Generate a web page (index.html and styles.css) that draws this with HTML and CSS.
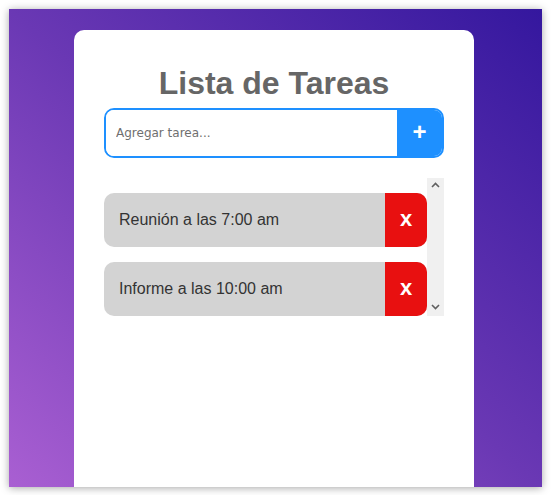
FILE: index.html
```html
<!DOCTYPE html>
<html lang="es">
<head>
<meta charset="utf-8">
<title>Lista de Tareas</title>
<link rel="stylesheet" href="styles.css">
</head>
<body>
<div class="window">
  <main class="card">
    <h1 class="title">Lista de Tareas</h1>
    <form class="add-form" onsubmit="return false">
      <input class="add-input" type="text" placeholder="Agregar tarea...">
      <button class="add-btn" type="button">+</button>
    </form>
    <div class="list-wrap">
      <ul class="task-list">
        <li class="task"><span class="task-text">Reunión a las 7:00 am</span><button class="del-btn" type="button">x</button></li>
        <li class="task"><span class="task-text">Informe a las 10:00 am</span><button class="del-btn" type="button">x</button></li>
      </ul>
      <div class="scrollbar" aria-hidden="true">
        <svg class="arrow" width="9" height="6" viewBox="0 0 9 6"><path d="M1 5 L4.5 1.5 L8 5" fill="none" stroke="#606060" stroke-width="1.6"/></svg>
        <svg class="arrow" width="9" height="6" viewBox="0 0 9 6"><path d="M1 1 L4.5 4.5 L8 1" fill="none" stroke="#606060" stroke-width="1.6"/></svg>
      </div>
    </div>
  </main>
</div>
</body>
</html>
```

FILE: styles.css
```css
html, body {
  margin: 0;
  padding: 0;
  background: #ffffff;
}
body {
  padding: 9px;
  box-sizing: border-box;
  width: 551px;
  height: 495px;
  font-family: "Liberation Sans", Arial, sans-serif;
}
.window {
  width: 533px;
  height: 478px;
  overflow: hidden;
  background: linear-gradient(to top right, #a95fd2 0%, #6a38b4 50%, #34179e 100%);
  box-shadow: 0 1px 8px rgba(0, 0, 0, 0.35);
  display: flex;
  justify-content: center;
  padding-top: 21px;
  box-sizing: border-box;
}
.card {
  width: 400px;
  min-height: 500px;
  background: #ffffff;
  border-radius: 10px;
  padding: 30px;
  box-sizing: border-box;
  margin-right: 3px;
}
.title {
  margin: 5px 0 6px;
  font-size: 32px;
  font-weight: bold;
  color: #666666;
  text-align: center;
  line-height: 37px;
}
.add-form {
  display: flex;
  height: 50px;
  border: 2px solid #1e90ff;
  border-radius: 10px;
  overflow: hidden;
  box-sizing: border-box;
  margin: 0;
}
.add-input {
  flex: 1;
  border: none;
  outline: none;
  padding: 0 0 0 10px;
  font-family: "DejaVu Sans", Verdana, sans-serif;
  font-size: 12px;
  color: #333;
  background: #fff;
  min-width: 0;
}
.add-input::placeholder {
  color: #6f6f6f;
}
.add-btn {
  width: 45px;
  border: none;
  background: #1e90ff;
  color: #ffffff;
  font-family: "Liberation Sans", Arial, sans-serif;
  font-size: 24px;
  font-weight: bold;
  padding: 0 0 2px;
}
.list-wrap {
  display: flex;
  margin-top: 20px;
}
.task-list {
  flex: 1;
  list-style: none;
  margin: 0;
  padding: 0;
}
.task {
  display: flex;
  align-items: stretch;
  height: 54px;
  margin-top: 15px;
  background: #d3d3d3;
  border-radius: 10px;
}
.task-text {
  flex: 1;
  display: flex;
  align-items: center;
  padding-left: 15px;
  font-size: 16px;
  color: #333333;
}
.del-btn {
  width: 42px;
  border: none;
  background: #e81010;
  color: #ffffff;
  font-family: "Liberation Sans", Arial, sans-serif;
  font-size: 22px;
  font-weight: bold;
  border-radius: 0 10px 10px 0;
  padding: 0 0 3px;
}
.scrollbar {
  width: 17px;
  background: #f0f0f0;
  display: flex;
  flex-direction: column;
  justify-content: space-between;
  align-items: center;
  padding: 4px 0 6px;
  box-sizing: border-box;
}
.arrow {
  display: block;
}
```
